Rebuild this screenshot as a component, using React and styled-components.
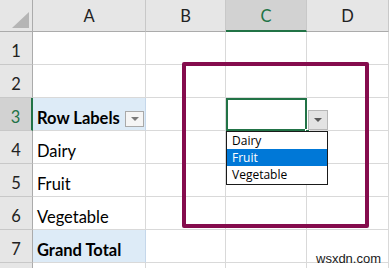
import React from "react";
import styled, { createGlobalStyle, css } from "styled-components";

const GlobalStyle = createGlobalStyle`
  html, body {
    margin: 0;
    padding: 0;
    background: #ffffff;
  }
  * {
    box-sizing: border-box;
  }
`;

const GREEN = "#217346";
const GRID = "#d9d9d9";

const Sheet = styled.div`
  position: relative;
  width: 389px;
  height: 268px;
  overflow: hidden;
  display: grid;
  grid-template-columns: 33px 113px 80px 81px 82px;
  grid-template-rows: 32px repeat(8, 33px);
  font-family: Lato, "Open Sans", sans-serif;
  color: #000;
`;

const Corner = styled.div`
  background: #e6e6e6;
  border-right: 1px solid #ababab;
  border-bottom: 1px solid #ababab;
  display: flex;
  align-items: flex-end;
  justify-content: flex-end;
  padding: 0 3px 3px 0;
`;

const Triangle = styled.div`
  width: 17px;
  height: 16px;
  background: #b5b5b5;
  clip-path: polygon(100% 0, 100% 100%, 0 100%);
`;

const ColHeader = styled.div`
  background: ${(p) => (p.active ? "#d2d2d2" : "#e6e6e6")};
  border-right: 1px solid #c8c8c8;
  border-bottom: ${(p) => (p.active ? `2px solid ${GREEN}` : "1px solid #ababab")};
  display: flex;
  align-items: center;
  justify-content: center;
  font-size: 16.5px;
  padding-top: 1px;
  color: ${(p) => (p.active ? GREEN : "#222")};
`;

const RowHeader = styled.div`
  background: ${(p) => (p.active ? "#d2d2d2" : "#e6e6e6")};
  border-bottom: 1px solid #c8c8c8;
  border-right: ${(p) => (p.active ? `2px solid ${GREEN}` : "1px solid #ababab")};
  display: flex;
  align-items: flex-end;
  justify-content: center;
  padding-bottom: 5px;
  font-size: 16.5px;
  line-height: 1;
  color: ${(p) => (p.active ? GREEN : "#222")};
`;

const Cell = styled.div`
  position: relative;
  background: ${(p) => (p.tint ? "#ddebf7" : "#fff")};
  border-right: 1px solid ${(p) => (p.tint ? "#c5d7ea" : GRID)};
  border-bottom: 1px solid ${GRID};
  display: flex;
  align-items: flex-end;
  justify-content: space-between;
  padding: 0 0 4px 4px;
  font-size: 16.5px;
  line-height: 1;
  font-weight: ${(p) => (p.bold ? 700 : 400)};
  white-space: nowrap;
  ${(p) =>
    p.selected &&
    css`
      border: none;
      box-shadow: inset 0 0 0 2px ${GREEN};
      overflow: visible;
      z-index: 3;
    `}
`;

const FilterButton = styled.div`
  width: 19px;
  height: 16px;
  margin-right: 1px;
  margin-bottom: -1px;
  border: 1px solid #a9a9a9;
  background: #f5f5f5;
  display: flex;
  align-items: center;
  justify-content: center;
`;

const DropButton = styled.div`
  position: absolute;
  left: 82px;
  top: 12px;
  width: 20px;
  height: 20px;
  border: 1px solid #b7b7b7;
  background: #e3e3e3;
  display: flex;
  align-items: center;
  justify-content: center;
`;

const Arrow = styled.div`
  width: 0;
  height: 0;
  border-left: 4px solid transparent;
  border-right: 4px solid transparent;
  border-top: 4px solid ${(p) => p.color || "#595959"};
`;

const Handle = styled.div`
  position: absolute;
  right: -3px;
  bottom: -3px;
  width: 5px;
  height: 5px;
  background: ${GREEN};
  border: 1px solid #fff;
`;

const ListBox = styled.ul`
  position: absolute;
  left: 226px;
  top: 131px;
  width: 102px;
  margin: 0;
  padding: 0 0 1px;
  list-style: none;
  background: #fff;
  border: 1px solid #1a1a1a;
  font-family: "Open Sans", "Noto Sans", sans-serif;
  font-size: 12px;
  z-index: 4;
`;

const ListItem = styled.li`
  height: 17px;
  line-height: 17px;
  padding-left: 5px;
  background: ${(p) => (p.highlighted ? "#0078d7" : "transparent")};
  color: ${(p) => (p.highlighted ? "#fff" : "#000")};
`;

const Frame = styled.div`
  position: absolute;
  left: 182px;
  top: 62px;
  width: 187px;
  height: 166px;
  border: 4.5px solid #850c4d;
  border-radius: 2px;
  z-index: 2;
  pointer-events: none;
`;

const Watermark = styled.div`
  position: absolute;
  left: 316px;
  top: 251px;
  font-family: "Liberation Sans", Arial, sans-serif;
  font-size: 13px;
  line-height: 15px;
  color: #1a1a1a;
  z-index: 5;
`;

const columns = ["A", "B", "C", "D"];

const rows = [
  { n: 1, a: "" },
  { n: 2, a: "" },
  { n: 3, a: "Row Labels", bold: true, tint: true, filter: true, active: true },
  { n: 4, a: "Dairy" },
  { n: 5, a: "Fruit" },
  { n: 6, a: "Vegetable" },
  { n: 7, a: "Grand Total", bold: true, tint: true },
  { n: 8, a: "", hidden: true },
];

const options = ["Dairy", "Fruit", "Vegetable"];

const App = () => {
  return (
    <>
      <GlobalStyle />
      <Sheet>
        <Corner>
          <Triangle />
        </Corner>
        {columns.map((c) => (
          <ColHeader key={c} active={c === "C"}>
            {c}
          </ColHeader>
        ))}
        {rows.map((row) => (
          <React.Fragment key={row.n}>
            <RowHeader active={row.active}>{row.hidden ? "" : row.n}</RowHeader>
            <Cell bold={row.bold} tint={row.tint}>
              {row.a}
              {row.filter && (
                <FilterButton>
                  <Arrow color="#7a7a7a" />
                </FilterButton>
              )}
            </Cell>
            <Cell />
            <Cell selected={row.n === 3}>
              {row.n === 3 && (
                <>
                  <Handle />
                  <DropButton>
                    <Arrow />
                  </DropButton>
                </>
              )}
            </Cell>
            <Cell />
          </React.Fragment>
        ))}
        <Frame />
        <ListBox>
          {options.map((o) => (
            <ListItem key={o} highlighted={o === "Fruit"}>
              {o}
            </ListItem>
          ))}
        </ListBox>
        <Watermark>wsxdn.com</Watermark>
      </Sheet>
    </>
  );
};

export default App;
